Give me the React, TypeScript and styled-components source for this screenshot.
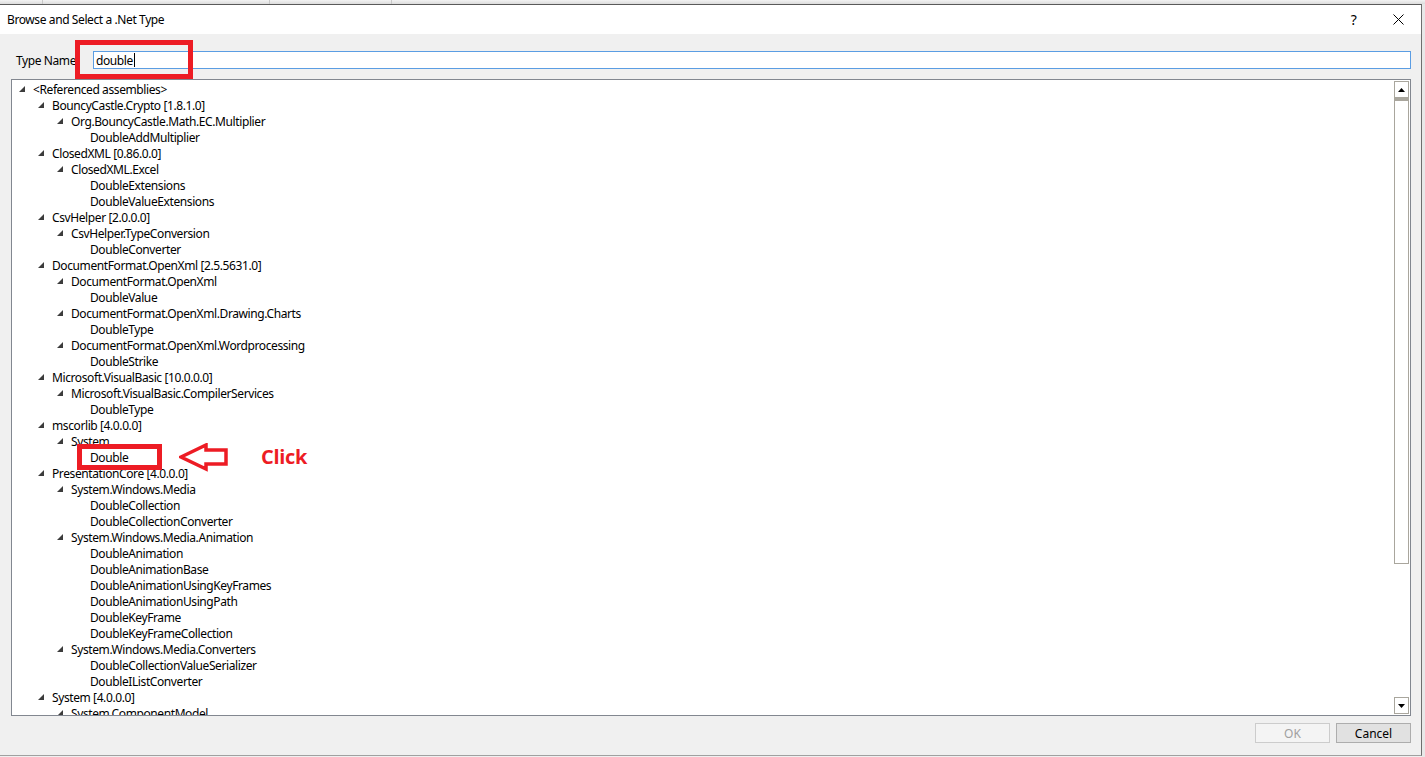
import React from "react";
import styled, { createGlobalStyle } from "styled-components";

const Global = createGlobalStyle`
  html, body { margin: 0; padding: 0; overflow: hidden; background: #f0f0f0; }
  * { box-sizing: border-box; }
`;

const FONT = `"Noto Sans", "Open Sans", sans-serif`;

const Screen = styled.div`
  position: relative;
  width: 1425px;
  height: 757px;
  display: flex;
  flex-direction: column;
  font-family: ${FONT};
  font-size: 12px;
  letter-spacing: -0.4px;
  color: #000;
  background: #f0f0f0;
  overflow: hidden;
`;

const BackStrip = styled.div`
  height: 4px;
  display: flex;
  background: linear-gradient(#f2f2f2, #dcdcdc);
`;

const BackCell = styled.div<{ $w: number }>`
  width: ${(p) => p.$w}px;
  border-right: 1px solid #c8c8c8;
  flex: none;
`;

const Row = styled.div`
  display: flex;
  flex: 1;
  min-height: 0;
`;

const Dialog = styled.div`
  width: 1422px;
  height: 752px;
  display: flex;
  flex-direction: column;
  border-top: 1px solid #5a5a5a;
  border-right: 1px solid #6e6e6e;
  border-bottom: 1px solid #a0a0a0;
  background: #f0f0f0;
`;

const Sliver = styled.div`
  flex: 1;
  background: #e8e8e8;
`;

const TitleBar = styled.div`
  height: 29px;
  background: #ffffff;
  display: flex;
  align-items: center;
  flex: none;
`;

const Title = styled.div`
  flex: 1;
  padding-left: 7px;
  color: #000;
`;

const CaptionButton = styled.div`
  width: 45px;
  height: 29px;
  display: flex;
  align-items: center;
  justify-content: center;
  font-size: 14px;
  color: #000;
`;

const Body = styled.div`
  flex: 1;
  display: flex;
  flex-direction: column;
  padding: 17px 10px 12px 11px;
`;

const TypeRow = styled.div`
  display: flex;
  align-items: center;
  height: 18px;
`;

const Label = styled.div`
  width: 82px;
  padding-left: 5px;
`;

const Input = styled.div`
  flex: 1;
  height: 18px;
  border: 1px solid #5b9de3;
  background: #fff;
  display: flex;
  align-items: center;
  padding-left: 2px;
`;

const Caret = styled.span`
  display: inline-block;
  width: 1px;
  height: 14px;
  background: #000;
  margin-left: 1px;
`;

const TreeBox = styled.div`
  margin-top: 10px;
  height: 637px;
  border: 1px solid #828790;
  background: #fff;
  display: flex;
  overflow: hidden;
`;

const TreeList = styled.div`
  flex: 1;
  padding-top: 1px;
  overflow: hidden;
`;

const TreeRow = styled.div<{ $level: number }>`
  height: 16px;
  display: flex;
  align-items: center;
  padding-left: ${(p) => p.$level * 19}px;
  white-space: nowrap;
`;

const Expander = styled.div`
  width: 21px;
  height: 16px;
  flex: none;
  display: flex;
  align-items: center;
  padding-left: 7px;
`;

const ScrollBar = styled.div`
  width: 15px;
  margin: 1px;
  display: flex;
  flex-direction: column;
`;

const ScrollButton = styled.div`
  height: 17px;
  border: 1px solid #a9a69d;
  display: flex;
  align-items: center;
  justify-content: center;
  background: #fff;
`;

const Thumb = styled.div`
  height: 466px;
  border: 1px solid #a9a69d;
  border-top: 3px solid #a9a69d;
  background: #fff;
`;

const Track = styled.div`
  flex: 1;
`;

const ButtonRow = styled.div`
  margin-top: 7px;
  height: 20px;
  display: flex;
  justify-content: flex-end;
  gap: 6px;
`;

const DlgButton = styled.div<{ $disabled?: boolean }>`
  width: 75px;
  height: 20px;
  display: flex;
  align-items: center;
  justify-content: center;
  letter-spacing: 0;
  border: 1px solid ${(p) => (p.$disabled ? "#cccccc" : "#adadad")};
  background: ${(p) => (p.$disabled ? "#f4f4f4" : "#e1e1e1")};
  color: ${(p) => (p.$disabled ? "#a0a0a0" : "#000")};
`;

const RedBox = styled.div<{ $x: number; $y: number; $w: number; $h: number }>`
  position: absolute;
  left: ${(p) => p.$x}px;
  top: ${(p) => p.$y}px;
  width: ${(p) => p.$w}px;
  height: ${(p) => p.$h}px;
  border: 5px solid #ed1c24;
  pointer-events: none;
`;

const ArrowMark = styled.svg`
  position: absolute;
  left: 179px;
  top: 443px;
`;

const ClickText = styled.div`
  position: absolute;
  left: 261px;
  top: 443px;
  font-family: "Open Sans", sans-serif;
  font-weight: 700;
  font-size: 20px;
  color: #ed1c24;
  line-height: 28px;
  letter-spacing: -0.3px;
`;

const Tri = () => (
  <svg width="6" height="6" viewBox="0 0 6 6">
    <polygon points="6,0 6,6 0,6" fill="#3c3c3c" />
  </svg>
);

type Item = [number, string, boolean];

const items: Item[] = [
  [0, "<Referenced assemblies>", true],
  [1, "BouncyCastle.Crypto [1.8.1.0]", true],
  [2, "Org.BouncyCastle.Math.EC.Multiplier", true],
  [3, "DoubleAddMultiplier", false],
  [1, "ClosedXML [0.86.0.0]", true],
  [2, "ClosedXML.Excel", true],
  [3, "DoubleExtensions", false],
  [3, "DoubleValueExtensions", false],
  [1, "CsvHelper [2.0.0.0]", true],
  [2, "CsvHelper.TypeConversion", true],
  [3, "DoubleConverter", false],
  [1, "DocumentFormat.OpenXml [2.5.5631.0]", true],
  [2, "DocumentFormat.OpenXml", true],
  [3, "DoubleValue", false],
  [2, "DocumentFormat.OpenXml.Drawing.Charts", true],
  [3, "DoubleType", false],
  [2, "DocumentFormat.OpenXml.Wordprocessing", true],
  [3, "DoubleStrike", false],
  [1, "Microsoft.VisualBasic [10.0.0.0]", true],
  [2, "Microsoft.VisualBasic.CompilerServices", true],
  [3, "DoubleType", false],
  [1, "mscorlib [4.0.0.0]", true],
  [2, "System", true],
  [3, "Double", false],
  [1, "PresentationCore [4.0.0.0]", true],
  [2, "System.Windows.Media", true],
  [3, "DoubleCollection", false],
  [3, "DoubleCollectionConverter", false],
  [2, "System.Windows.Media.Animation", true],
  [3, "DoubleAnimation", false],
  [3, "DoubleAnimationBase", false],
  [3, "DoubleAnimationUsingKeyFrames", false],
  [3, "DoubleAnimationUsingPath", false],
  [3, "DoubleKeyFrame", false],
  [3, "DoubleKeyFrameCollection", false],
  [2, "System.Windows.Media.Converters", true],
  [3, "DoubleCollectionValueSerializer", false],
  [3, "DoubleIListConverter", false],
  [1, "System [4.0.0.0]", true],
  [2, "System.ComponentModel", true],
];

export default function App() {
  return (
    <Screen>
      <Global />
      <BackStrip>
        <BackCell $w={43} />
        <BackCell $w={227} />
        <BackCell $w={122} />
      </BackStrip>
      <Row>
        <Dialog>
          <TitleBar>
            <Title>Browse and Select a .Net Type</Title>
            <CaptionButton>?</CaptionButton>
            <CaptionButton>
              <svg width="11" height="11" viewBox="0 0 11 11">
                <path d="M0.5 0.5 L10.5 10.5 M10.5 0.5 L0.5 10.5" stroke="#000" strokeWidth="1" />
              </svg>
            </CaptionButton>
          </TitleBar>
          <Body>
            <TypeRow>
              <Label>Type Name</Label>
              <Input>
                double
                <Caret />
              </Input>
            </TypeRow>
            <TreeBox>
              <TreeList>
                {items.map(([lvl, text, exp], i) => (
                  <TreeRow key={i} $level={lvl}>
                    <Expander>{exp ? <Tri /> : null}</Expander>
                    {text}
                  </TreeRow>
                ))}
              </TreeList>
              <ScrollBar>
                <ScrollButton>
                  <svg width="7" height="4" viewBox="0 0 7 4">
                    <polygon points="3.5,0 7,4 0,4" fill="#000" />
                  </svg>
                </ScrollButton>
                <Thumb />
                <Track />
                <ScrollButton>
                  <svg width="7" height="4" viewBox="0 0 7 4">
                    <polygon points="0,0 7,0 3.5,4" fill="#000" />
                  </svg>
                </ScrollButton>
              </ScrollBar>
            </TreeBox>
            <ButtonRow>
              <DlgButton $disabled>OK</DlgButton>
              <DlgButton>Cancel</DlgButton>
            </ButtonRow>
          </Body>
        </Dialog>
        <Sliver />
      </Row>
      <RedBox $x={75} $y={40} $w={118} $h={39} />
      <RedBox $x={77} $y={444} $w={85} $h={26} />
      <ArrowMark width="50" height="29" viewBox="0 0 50 29">
        <polygon
          points="2,14 27,2 27,7 47,7 47,21 27,21 27,26"
          fill="none"
          stroke="#ed1c24"
          strokeWidth="3.5"
          strokeLinejoin="miter"
        />
      </ArrowMark>
      <ClickText>Click</ClickText>
    </Screen>
  );
}
